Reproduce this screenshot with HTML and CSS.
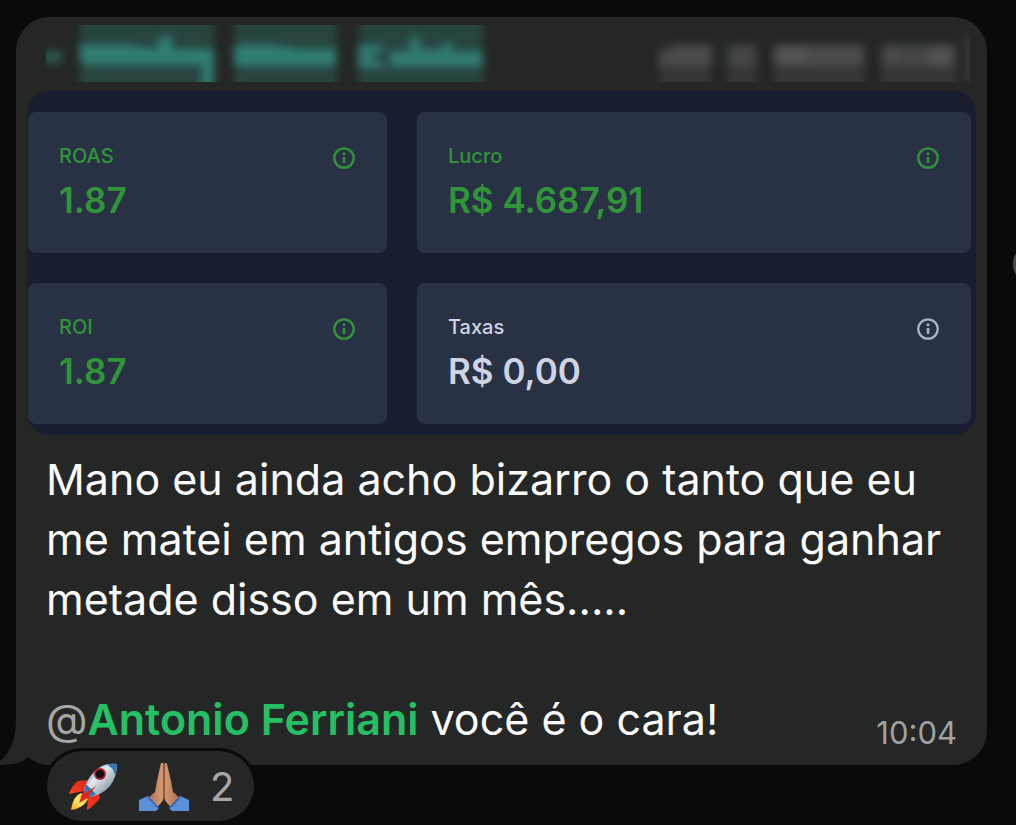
FILE: index.html
```html
<!DOCTYPE html>
<html lang="pt-BR">
<head>
<meta charset="utf-8">
<meta name="viewport" content="width=device-width, initial-scale=1">
<title>Mensagem</title>
<link rel="stylesheet" href="styles.css">
</head>
<body>
<svg class="defs" aria-hidden="true">
  <symbol id="info" viewBox="0 0 24 24">
    <circle cx="12" cy="12" r="9.7" fill="none" stroke="currentColor" stroke-width="2.3"/>
    <path d="M12 11v6" stroke="currentColor" stroke-width="2.6"/>
    <circle cx="12" cy="7.8" r="1.5" fill="currentColor"/>
  </symbol>
</svg>
<main class="chat">
  <article class="bubble">
    <svg class="tail" viewBox="0 0 52 65" aria-hidden="true">
      <path fill="#252726" d="M16 0V19C16 37 11 53 0 61V65C12 65 22 63 28 57C34 62 42 65 52 65V0Z"/>
    </svg>
    <header class="sender">
      <svg class="hidden-name" viewBox="0 0 444 57" role="img" aria-label="Nome oculto">
        <defs><filter id="soft" x="-20%" y="-50%" width="140%" height="200%"><feGaussianBlur stdDeviation="4.5"/></filter></defs>
        <g filter="url(#soft)" fill="#31887a">
          <path opacity=".3" d="M34 -8h134v76H34zM189 -8h102v76H189zM313 -8h124v76H313z"/>
          <path opacity=".5" d="M-4 26h20v12H-4z"/>
          <path opacity=".85" d="M32 20h48l32 4V12h14v12h42v40h-12V40H36zM188 20h34l32 4h36v17H188z"/>
          <path opacity=".8" d="M312 20h25v8h-9v8h10v7h-26zM344 26h20V12h10v12h22v-6h10v8h31v16h-93z"/>
        </g>
      </svg>
      <svg class="hidden-phone" viewBox="0 0 316 57" role="img" aria-label="Telefone oculto">
        <g filter="url(#soft)" fill="#5c5e5c">
          <path opacity=".28" d="M6 20h50v42H6zM74 20h28v42H74zM120 20h90v42h-90zM228 20h74v42H228z"/>
          <path opacity=".55" d="M4 28h14v-8h40v21H4zM120 20h90v21h-90zM228 20h14v21h-14zM272 20h28v21h-28z"/>
          <path opacity=".4" d="M74 20h28v22H74zM242 20h30v22h-30zM313 12h8v48h-8z"/>
          <path opacity=".4" d="M122 22h30v16h-30zM276 24h20v16h-20z"/>
        </g>
      </svg>
    </header>
    <section class="media">
      <div class="card">
        <div><h2 class="label">ROAS</h2><p class="value">1.87</p></div>
        <button class="info" aria-label="Sobre ROAS"><svg><use href="#info"/></svg></button>
      </div>
      <div class="card">
        <div><h2 class="label">Lucro</h2><p class="value">R$ 4.687,91</p></div>
        <button class="info" aria-label="Sobre Lucro"><svg><use href="#info"/></svg></button>
      </div>
      <div class="card">
        <div><h2 class="label">ROI</h2><p class="value">1.87</p></div>
        <button class="info" aria-label="Sobre ROI"><svg><use href="#info"/></svg></button>
      </div>
      <div class="card neutral">
        <div><h2 class="label">Taxas</h2><p class="value">R$ 0,00</p></div>
        <button class="info" aria-label="Sobre Taxas"><svg><use href="#info"/></svg></button>
      </div>
    </section>
    <div class="message">
      <p class="text">Mano eu ainda acho bizarro o tanto que eu me matei em antigos empregos para ganhar metade disso em um mês.....</p>
      <div class="last">
        <p class="text"><span class="at">@</span><a class="mention" href="#antonio">Antonio Ferriani</a> você é o cara!</p>
        <time class="time">10:04</time>
      </div>
    </div>
  </article>
  <button class="reactions" aria-label="2 reações">
    <svg class="emoji" viewBox="0 0 50 50" aria-hidden="true">
      <defs>
        <linearGradient id="hull" x1="0" y1="0" x2="1" y2="1"><stop offset=".15" stop-color="#4d8ec4"/><stop offset=".4" stop-color="#e6ebed"/><stop offset=".65" stop-color="#a9b5bd"/><stop offset="1" stop-color="#3975a8"/></linearGradient>
        <linearGradient id="fin" x1="1" y1="0" x2="0" y2="1"><stop stop-color="#d81f1c"/><stop offset=".6" stop-color="#f1361c"/><stop offset="1" stop-color="#ff9a21"/></linearGradient>
        <linearGradient id="flame" x1="1" y1="0" x2="0" y2="1"><stop stop-color="#ffbb28"/><stop offset=".5" stop-color="#ffe96b"/><stop offset="1" stop-color="#f8a21d"/></linearGradient>
      </defs>
      <path fill="url(#fin)" d="M21 18L10 19Q4 23 1 32L16 29ZM31 31L32 36Q26 44 19 48L20 35Z"/>
      <path fill="url(#flame)" d="M13 31Q5 34 3 48Q16 46 20 37Z"/>
      <path fill="#d82a1d" d="M16 27L23 34L11 41Z"/>
      <path fill="url(#hull)" d="M49 2Q35 0 26 10Q19 17 16 28L23 35Q35 32 42 24Q49 15 49 2Z"/>
      <path fill="#3376b8" d="M49 2Q43 1 39 3Q45 5 47 13Q49 8 49 2ZM18 22L16 28L23 35L28 32Z"/>
      <path fill="#dc261d" d="M28 24L12 35L20 34Z"/>
      <circle cx="32" cy="12" r="6" fill="#b82031"/><circle cx="32" cy="12" r="4.3" fill="#101015"/>
    </svg>
    <svg class="emoji" viewBox="0 0 50 50" aria-hidden="true">
      <defs><linearGradient id="skin" x1="0" x2="1"><stop stop-color="#a96a4b"/><stop offset=".45" stop-color="#d49a73"/><stop offset=".5" stop-color="#975b3e"/><stop offset=".55" stop-color="#d39770"/><stop offset="1" stop-color="#a7684a"/></linearGradient></defs>
      <path fill="url(#skin)" d="M22 1Q24 0 25 2Q27 0 28 2L32 19L34 30L42 37L35 47Q28 43 25 36Q22 43 15 47L8 37L16 30L18 19Z"/>
      <path fill="none" stroke="#7d4934" d="M25 2V37"/>
      <path fill="#5a91dc" d="M9 34L20 46L17 49H0V38ZM41 34L30 46L33 49H50V38Z"/>
      <path fill="none" stroke="#3b69b5" stroke-width="2" d="M9 35L19 46M41 35L31 46"/>
    </svg>
    <span class="count">2</span>
  </button>
  <span class="edge"></span>
</main>
</body>
</html>
```
FILE: styles.css
```css
* { box-sizing: border-box; }
body {
  margin: 0;
  background: #090a0a;
  font-family: Inter, "Liberation Sans", sans-serif;
}
h2, p { margin: 0; }
button {
  border: 0;
  padding: 0;
  background: none;
  font: inherit;
  color: inherit;
}
.defs { position: absolute; width: 0; height: 0; }
.chat {
  position: relative;
  min-height: 100vh;
  overflow: hidden;
  padding: 17px 29px 4px 16px;
}
.bubble {
  position: relative;
  background: #252726;
  border-radius: 34px;
}
.tail {
  position: absolute;
  left: -16px;
  bottom: 0;
  width: 52px;
  height: 65px;
}
.sender {
  display: flex;
  justify-content: space-between;
  padding: 8px 17px 9px 30px;
}
.hidden-name { width: 444px; height: 57px; overflow: hidden; }
.hidden-phone { width: 316px; height: 57px; overflow: hidden; }
.media {
  display: grid;
  grid-template-columns: 359fr 554fr;
  gap: 30px;
  margin: 0 11px;
  padding: 21px 5px 11px 1px;
  background: #181d30;
  border-radius: 22px;
}
.card {
  display: flex;
  justify-content: space-between;
  align-items: flex-start;
  padding: 30px 31px;
  background: #293145;
  border-radius: 8px;
  color: #309539;
}
.neutral { color: #ced4e2; }
.label {
  font-size: 20px;
  line-height: 28px;
  font-weight: 500;
}
.value {
  margin-top: 8px;
  font-size: 35px;
  line-height: 45px;
  font-weight: 600;
}
.info { margin-top: 4px; width: 24px; height: 24px; }
.info svg { display: block; width: 24px; height: 24px; }
.neutral .info { color: #aab2c5; }
.message { position: relative; padding: 14px 30px 16px; }
.text {
  font-size: 43px;
  line-height: 60px;
  color: #fafafa;
}
.last {
  display: flex;
  justify-content: space-between;
  align-items: flex-end;
  margin-top: 60px;
}
.at { color: #a5a6a5; }
.mention { color: #25c063; font-weight: 600; text-decoration: none; }
.time { font-size: 31px; line-height: 32px; color: #a0a1a0; }
.reactions {
  position: relative;
  display: flex;
  align-items: center;
  gap: 21px;
  height: 70px;
  margin: -14px 0 0 31px;
  padding: 2px 20px 0 21px;
  background: #252726;
  border-radius: 35px;
  box-shadow: 0 0 0 3px #090a0a;
}
.emoji { width: 50px; height: 50px; }
.count { font-size: 40px; line-height: 48px; color: #a5a6a5; }
.edge {
  position: absolute;
  top: 244px;
  right: -37px;
  width: 40px;
  height: 40px;
  border-radius: 50%;
  background: #4b4c4c;
}
```
